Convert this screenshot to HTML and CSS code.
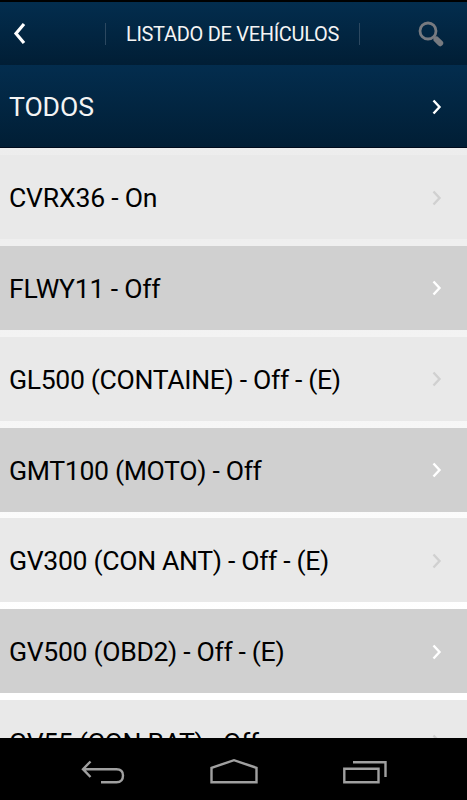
FILE: index.html
```html
<!DOCTYPE html>
<html lang="es">
<head>
  <meta charset="UTF-8" />
  <meta name="viewport" content="width=device-width, initial-scale=1.0"/>
  <title>Listado de vehículos</title>
  <link rel="stylesheet" href="styles.css">
</head>
<body>

<header class="topbar">
  <svg class="back" viewBox="0 0 14 24"><path d="M12 2 L4 11.5 L12 21"/></svg>
  <h1>LISTADO DE VEHÍCULOS</h1>
  <svg class="search" viewBox="0 0 28 28">
    <circle cx="11" cy="11" r="8"/>
    <path class="neck" d="M16.5 16.5 L19 19"/>
    <path class="handle" d="M19.5 19.5 L23.2 23.2"/>
  </svg>
</header>

<main class="list">
  <div class="row all"><span>TODOS</span><svg class="arrow" viewBox="0 0 10 16"><path d="M1.5 1.5 L7.5 8 L1.5 14.5"/></svg></div>
  <div class="row short"><span>CVRX36 - On</span><svg class="arrow" viewBox="0 0 10 16"><path d="M1.5 1.5 L7.5 8 L1.5 14.5"/></svg></div>
  <div class="row dark short"><span>FLWY11 - Off</span><svg class="arrow" viewBox="0 0 10 16"><path d="M1.5 1.5 L7.5 8 L1.5 14.5"/></svg></div>
  <div class="row"><span>GL500 (CONTAINE) - Off - (E)</span><svg class="arrow" viewBox="0 0 10 16"><path d="M1.5 1.5 L7.5 8 L1.5 14.5"/></svg></div>
  <div class="row dark"><span>GMT100 (MOTO) - Off</span><svg class="arrow" viewBox="0 0 10 16"><path d="M1.5 1.5 L7.5 8 L1.5 14.5"/></svg></div>
  <div class="row"><span>GV300 (CON ANT) - Off - (E)</span><svg class="arrow" viewBox="0 0 10 16"><path d="M1.5 1.5 L7.5 8 L1.5 14.5"/></svg></div>
  <div class="row dark"><span>GV500 (OBD2) - Off - (E)</span><svg class="arrow" viewBox="0 0 10 16"><path d="M1.5 1.5 L7.5 8 L1.5 14.5"/></svg></div>
  <div class="row"><span>GV55 (CON BAT) - Off</span><svg class="arrow" viewBox="0 0 10 16"><path d="M1.5 1.5 L7.5 8 L1.5 14.5"/></svg></div>
</main>

<nav class="navbar">
  <svg viewBox="0 0 46 26"><path d="M3 11.2 H36.5 C41 11.2 43 14 43 17.5 C43 21.5 41 24.2 36.5 24.2 H21 M10.5 3.5 L3 11.2 L10.5 19"/></svg>
  <svg class="home" viewBox="0 0 48 26"><path d="M1.5 24.2 V9.8 L24 2.2 L46.5 9.8 V24.2 Z"/></svg>
  <svg class="recent" viewBox="0 0 46 26"><path d="M2.3 10.8 H36.5 V24.3 H2.3 Z M11 4.2 H43.5 V19"/></svg>
</nav>

</body>
</html>
```

FILE: styles.css
```css
* {
  box-sizing: border-box;
}
body {
  font-family: Roboto, sans-serif;
  margin: 0;
  height: 100vh;
  display: flex;
  flex-direction: column;
  overflow: hidden;
  background: #000;
}
svg {
  fill: none;
  flex: none;
}
.topbar {
  display: flex;
  align-items: center;
  height: 65px;
  flex: none;
  padding: 0 22px 0 12px;
  border-top: 2px solid #000;
  background: linear-gradient(#032d4e, #011e35);
}
.topbar h1 {
  margin: 0 auto 0 79px;
  width: 255px;
  height: 22px;
  line-height: 23px;
  text-align: center;
  font-size: 20px;
  font-weight: 400;
  letter-spacing: -0.3px;
  color: #f4f4f4;
  white-space: nowrap;
  border-left: 1px solid #2c4860;
  border-right: 1px solid #2c4860;
}
.back {
  width: 14px;
  height: 24px;
  stroke: #fff;
  stroke-width: 3.2;
}
.search {
  width: 28px;
  height: 28px;
  stroke: #777a80;
  stroke-width: 2.8;
}
.search .handle {
  stroke-width: 6;
  stroke-linecap: round;
}
.list {
  flex: 1;
  min-height: 0;
  overflow: hidden;
  display: flex;
  flex-direction: column;
  gap: 6.8px;
  background: linear-gradient(#ededed 80px, #efefef 180px, #fff 550px);
}
.row {
  flex: none;
  display: flex;
  justify-content: space-between;
  align-items: center;
  height: 84px;
  padding: 1px 25px 0 9px;
  background: #e9e9e9;
  color: #000;
  font-size: 26.6px;
  letter-spacing: -0.34px;
  white-space: nowrap;
}
.row.short {
  letter-spacing: -0.22px;
}
.row.dark {
  background: #d0d0d0;
}
.row.all {
  height: 83.4px;
  background: linear-gradient(#032d4e, #011e35);
  border-bottom: 1px solid #000b1c;
  color: #f4f4f4;
  letter-spacing: -0.1px;
}
.arrow {
  width: 10px;
  height: 16px;
  stroke: #d0d0d0;
  stroke-width: 2.4;
}
.dark .arrow,
.all .arrow {
  stroke: #fff;
}
.navbar {
  flex: none;
  height: 62px;
  display: flex;
  justify-content: space-between;
  align-items: center;
  padding: 3px 79px 0 80px;
  background: #000;
}
.navbar svg {
  width: 46px;
  height: 26px;
  stroke: #a0a0a0;
  stroke-width: 2.4;
}
.navbar .home {
  width: 48px;
}
```
